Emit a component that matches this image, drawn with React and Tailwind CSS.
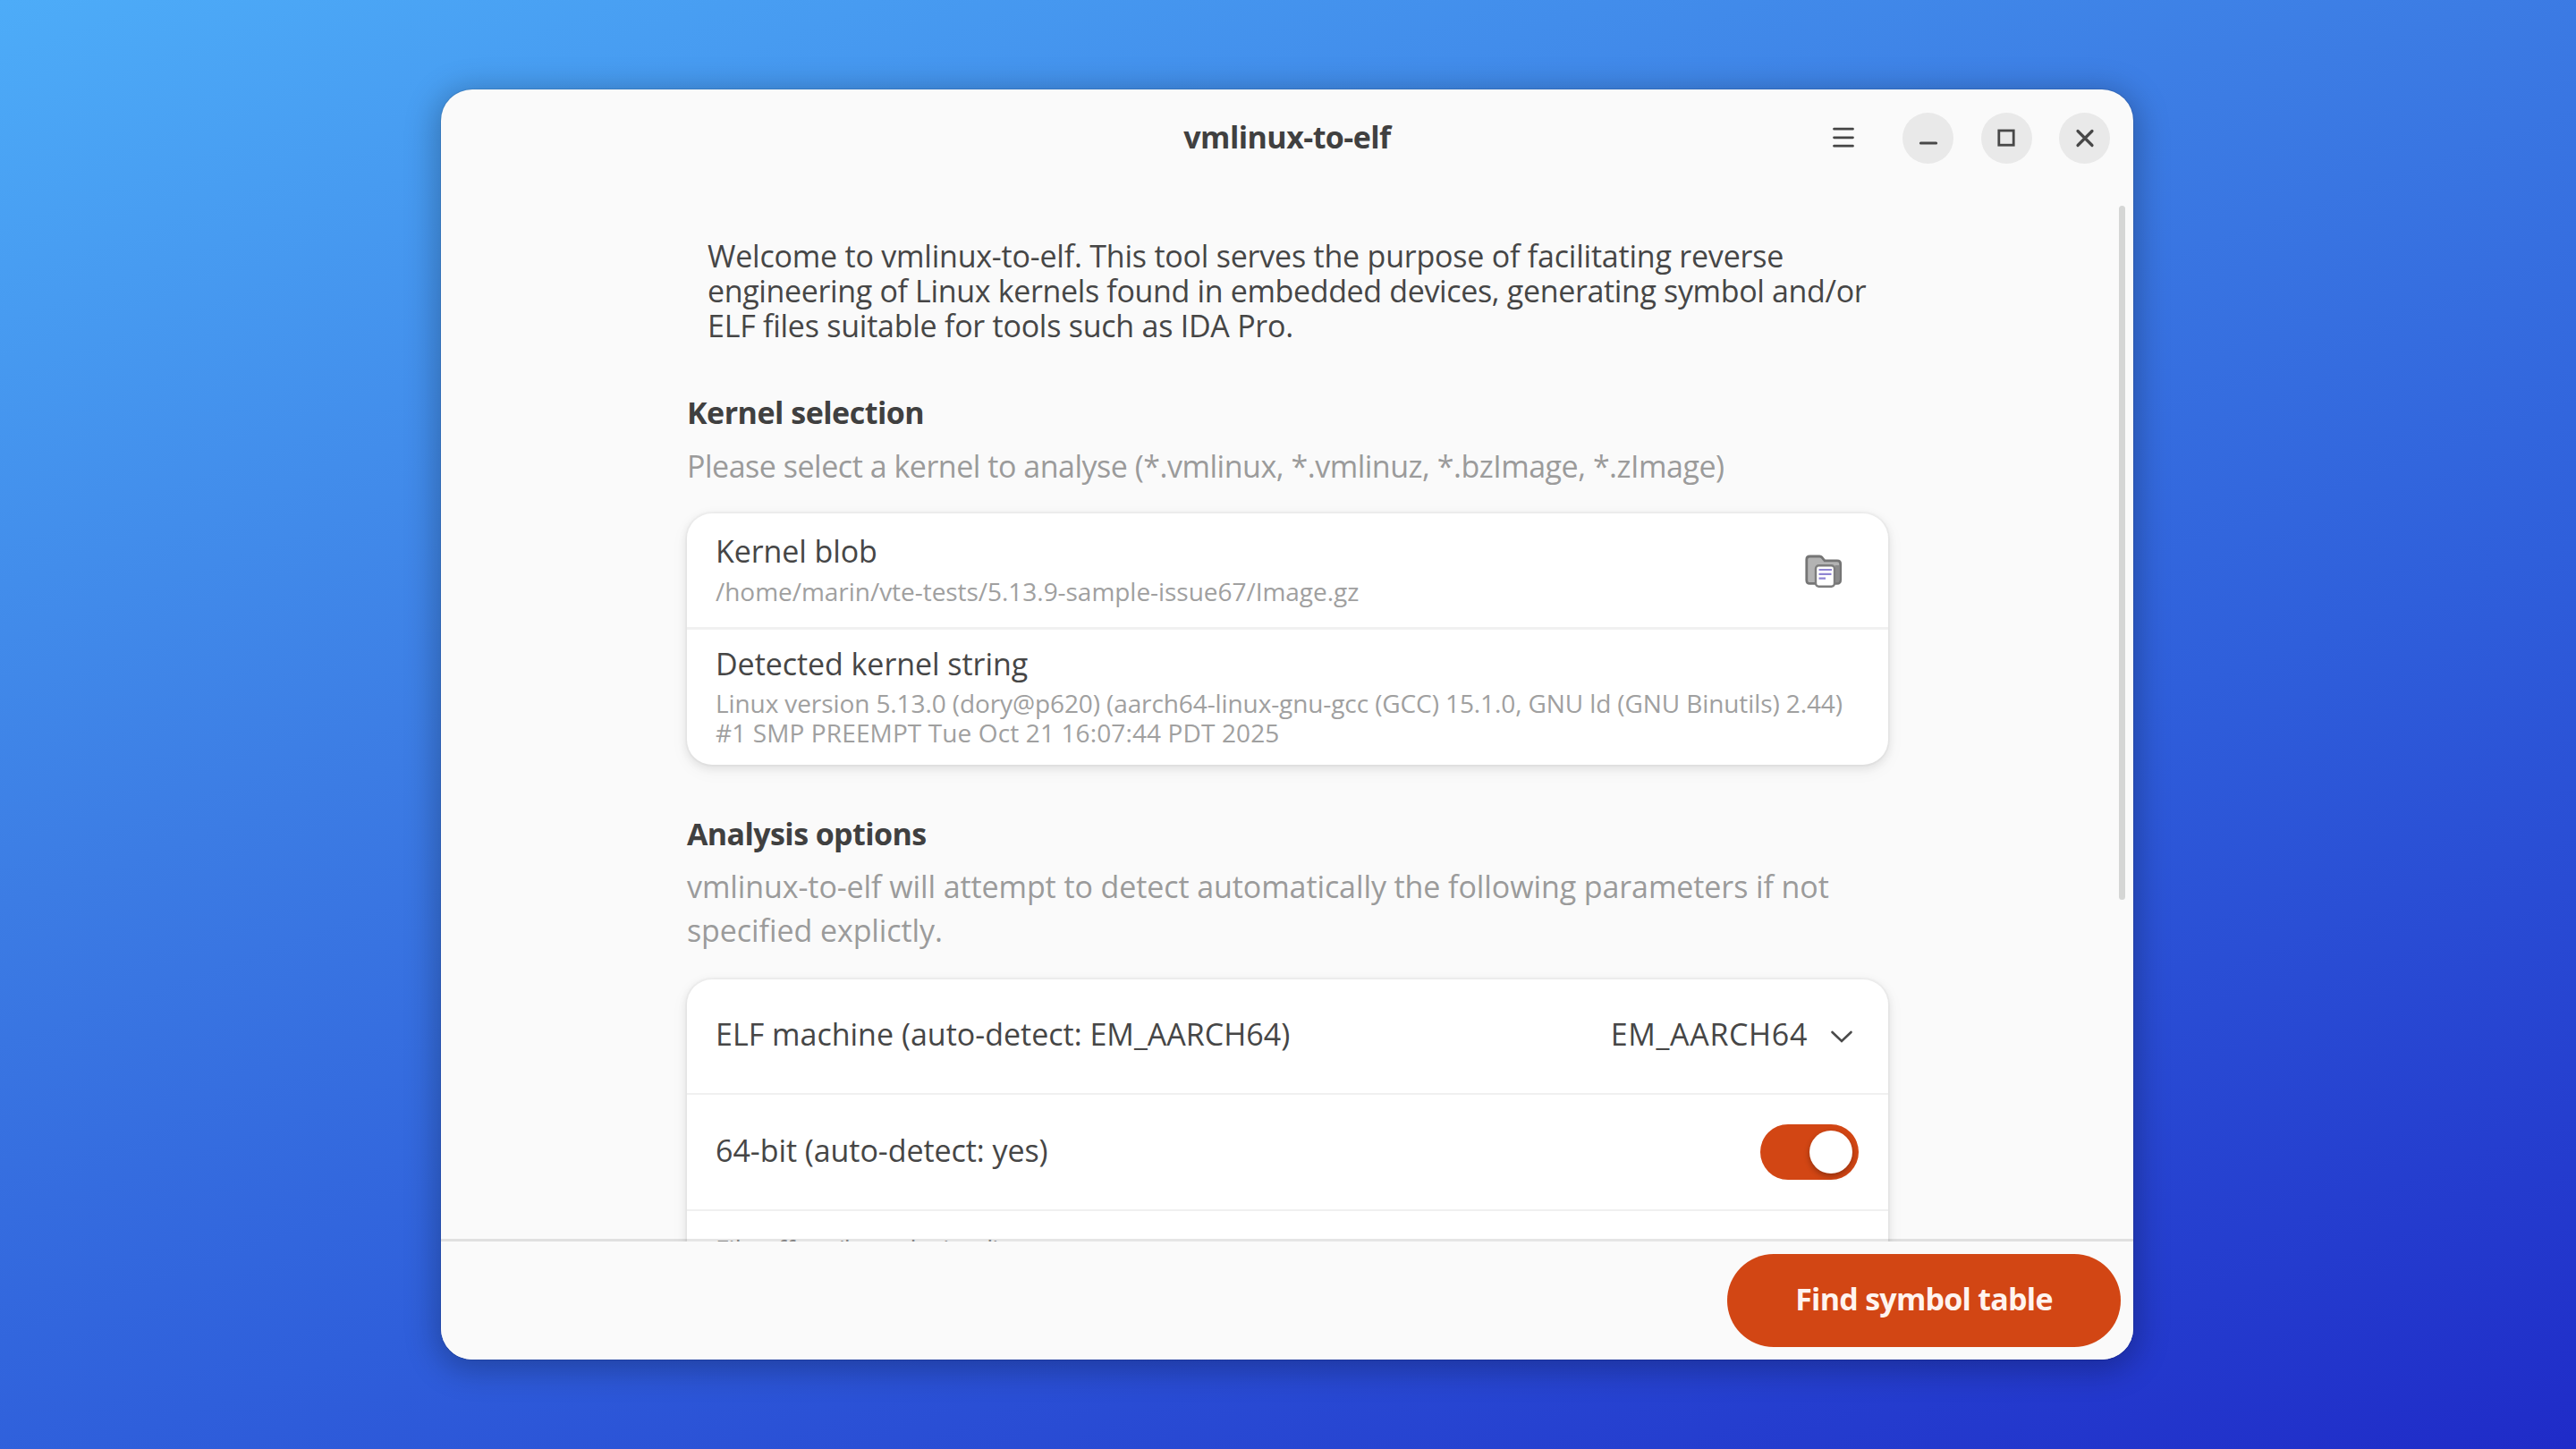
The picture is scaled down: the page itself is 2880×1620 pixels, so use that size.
function MenuIcon() {
  return (
    <svg className="h-6 w-6" viewBox="0 0 24 24" stroke="#454545" strokeLinecap="round">
      <path d="M1.5 2.200h21M1.5 11.800h21M1.5 21.200h21" strokeWidth="2.700" />
    </svg>
  );
}

function MinimizeIcon() {
  return (
    <svg className="h-6 w-6" viewBox="0 0 24 24" stroke="#484848" strokeWidth="3" strokeLinecap="round">
      <path d="M3.400 18h17.200" />
    </svg>
  );
}

function MaximizeIcon() {
  return (
    <svg className="h-6 w-6" viewBox="0 0 24 24" fill="none" stroke="#484848" strokeWidth="2.800">
      <rect x="3.800" y="4" width="16.400" height="16.200" />
    </svg>
  );
}

function CloseIcon() {
  return (
    <svg className="h-6 w-6" viewBox="0 0 24 24" stroke="#484848" strokeWidth="3.200" strokeLinecap="round">
      <path d="M4 4.500 20 20.500M20 4.500 4 20.500" />
    </svg>
  );
}

function WindowButton({ label, children }) {
  return (
    <button
      type="button"
      aria-label={label}
      className="flex h-[57px] w-[57px] items-center justify-center rounded-full bg-[#e9e9e9]"
    >
      {children}
    </button>
  );
}

function FolderIcon() {
  return (
    <svg className="h-[37px] w-[42px]" viewBox="0 0 42 37" fill="none">
      <path
        d="M5.500 2h10.800c1.200 0 2 .4 2.800 1.300l2.900 3.500h14c2.400 0 3.700 1.400 3.700 3.700v17.500c0 2.700-1.400 4.400-4 4.400h-30.400c-2.300 0-3.500-1.400-3.500-3.600v-23.300c0-2.200 1.300-3.500 3.700-3.500z"
        fill="#b3b3b3"
        stroke="#757575"
        strokeWidth="2.800"
      />
      <path d="M33.500 12h4.800v16.500c0 2-1 2.800-2.600 2.800h-2.200z" fill="#8b8b8b" />
      <rect x="12" y="12.200" width="21" height="23.600" rx="3.500" fill="#fff" stroke="#7d7d7d" strokeWidth="2.400" />
      <path d="M15.500 17h14.500M15.500 21.800h14M15.500 26.600h7.500" stroke="#8f84d2" strokeWidth="2.200" />
    </svg>
  );
}

function ChevronDown() {
  return (
    <svg className="h-4 w-[26px]" viewBox="0 0 26 16" fill="none" stroke="#4a4a4a" strokeWidth="2.600" strokeLinecap="round">
      <path d="M2.500 3 13 13 23.500 3" />
    </svg>
  );
}

function Switch() {
  return (
    <div className="flex h-[62px] w-[110px] items-center justify-end rounded-full bg-[#d24614] pr-[7px]">
      <div className="h-12 w-12 rounded-full bg-white shadow-[0_3px_6px_rgba(0,0,0,0.3)]" />
    </div>
  );
}

const card =
  "w-[1343px] rounded-[28px] bg-white shadow-[0_0_0_2px_rgba(0,0,6,0.025),0_3px_8px_2px_rgba(0,0,6,0.07),0_6px_18px_4px_rgba(0,0,6,0.03)]";

export default function App() {
  return (
    <div className="flex h-[1620px] w-[2880px] overflow-hidden bg-[linear-gradient(160deg,#4dacf8_0%,#3c7ce4_38%,#2f5fdb_62%,#1f2bc8_100%)] pt-[100px] pl-[493px] font-['Open_Sans','Noto_Sans',sans-serif] text-[34px] text-[#464646]">
      <div className="flex h-[1420px] w-[1892px] flex-col overflow-hidden rounded-[35px] bg-[#fafafa] shadow-[0_0_0_1px_rgba(0,0,0,0.08),0_6px_34px_6px_rgba(0,0,0,0.25)]">
        <header className="grid h-[108px] shrink-0 grid-cols-[1fr_auto_1fr] items-center">
          <div />
          <h1 className="pb-[3px] leading-[44px] font-bold tracking-[-0.550px] text-[#404040]">vmlinux-to-elf</h1>
          <div className="flex items-center justify-end pr-[26px]">
            <button type="button" aria-label="Menu" className="mr-[54px]">
              <MenuIcon />
            </button>
            <div className="flex gap-[30.500px]">
              <WindowButton label="Minimize">
                <MinimizeIcon />
              </WindowButton>
              <WindowButton label="Maximize">
                <MaximizeIcon />
              </WindowButton>
              <WindowButton label="Close">
                <CloseIcon />
              </WindowButton>
            </div>
          </div>
        </header>

        <div className="flex h-[1180px] shrink-0 justify-between overflow-hidden pr-[9px] pl-[275px]">
          <main className="w-[1343px]">
            <p className="ml-[23px] pt-[59px] leading-[39px] whitespace-nowrap">
              <span className="block tracking-[-0.215px]">
                Welcome to vmlinux-to-elf. This tool serves the purpose of facilitating reverse
              </span>
              <span className="block tracking-[-0.350px]">
                engineering of Linux kernels found in embedded devices, generating symbol and/or
              </span>
              <span className="block tracking-[-0.250px]">ELF files suitable for tools such as IDA Pro.</span>
            </p>

            <h2 className="mt-[57px] leading-[40px] font-bold tracking-[-0.500px] text-[#404040]">Kernel selection</h2>
            <p className="mt-4 leading-[48px] tracking-[-0.480px] whitespace-nowrap text-[#9b9b9b]">
              Please select a kernel to analyse (*.vmlinux, *.vmlinuz, *.bzImage, *.zImage)
            </p>

            <section className={card + " mt-[29px] h-[281px]"}>
              <div className="flex h-[130px] justify-between border-b-[3px] border-[#f1f1f1] pr-[51px] pl-8">
                <div className="pt-5 whitespace-nowrap">
                  <div className="leading-[44px] tracking-[-0.100px]">Kernel blob</div>
                  <div className="mt-[7px] text-[28px] leading-[33px] tracking-[-0.040px] text-[#a0a0a0]">
                    /home/marin/vte-tests/5.13.9-sample-issue67/Image.gz
                  </div>
                </div>
                <button type="button" aria-label="Select kernel" className="pt-px">
                  <FolderIcon />
                </button>
              </div>
              <div className="px-8 pt-4 whitespace-nowrap">
                <div className="leading-[44px] tracking-[-0.060px]">Detected kernel string</div>
                <div className="mt-1.5 text-[28px] leading-[33px] text-[#a0a0a0]">
                  <span className="block tracking-[-0.100px]">
                    Linux version 5.13.0 (dory@p620) (aarch64-linux-gnu-gcc (GCC) 15.1.0, GNU ld (GNU Binutils) 2.44)
                  </span>
                  <span className="block tracking-[0.120px]">#1 SMP PREEMPT Tue Oct 21 16:07:44 PDT 2025</span>
                </div>
              </div>
            </section>

            <h2 className="mt-[57px] leading-[40px] font-bold tracking-[-0.600px] text-[#404040]">Analysis options</h2>
            <p className="mt-[15px] leading-[48.500px] whitespace-nowrap text-[#9b9b9b]">
              <span className="block tracking-[-0.090px]">
                vmlinux-to-elf will attempt to detect automatically the following parameters if not
              </span>
              <span className="block tracking-[-0.080px]">specified explictly.</span>
            </p>

            <section className={card + " mt-[31px] h-[500px]"}>
              <div className="flex h-[129px] items-center justify-between border-b-2 border-[#f0f0f0] pr-[39px] pl-8 whitespace-nowrap">
                <div className="pb-[5px] leading-[44px]">ELF machine (auto-detect: EM_AARCH64)</div>
                <div className="flex items-center gap-[25px]">
                  <span className="pb-[5px] leading-[44px] tracking-[0.650px]">EM_AARCH64</span>
                  <ChevronDown />
                </div>
              </div>
              <div className="flex h-[130px] items-center justify-between border-b-2 border-[#f0f0f0] pr-[33px] pl-8 whitespace-nowrap">
                <div className="pb-[5px] leading-[44px] tracking-[-0.060px]">64-bit (auto-detect: yes)</div>
                <Switch />
              </div>
              <div className="px-8 pt-[25px] text-[28px] leading-[34px] tracking-[0.150px] text-[#929292]">
                File offset (hexadecimal)
              </div>
            </section>
          </main>
          <div className="mt-[22px] h-[776px] w-[7px] rounded-full bg-[#d5d6d5]" />
        </div>

        <footer className="relative -mt-[3px] flex h-[135px] shrink-0 items-start justify-end border-t-[3px] border-black/10 bg-[#fafafa] bg-clip-padding pt-[13.500px] pr-3.5">
          <button
            type="button"
            className="flex h-[104px] w-[440px] items-center justify-center rounded-full bg-[#d24614] pb-[2px] font-bold tracking-[-0.750px] whitespace-nowrap text-[#fff4ef]"
          >
            Find symbol table
          </button>
        </footer>
      </div>
    </div>
  );
}
